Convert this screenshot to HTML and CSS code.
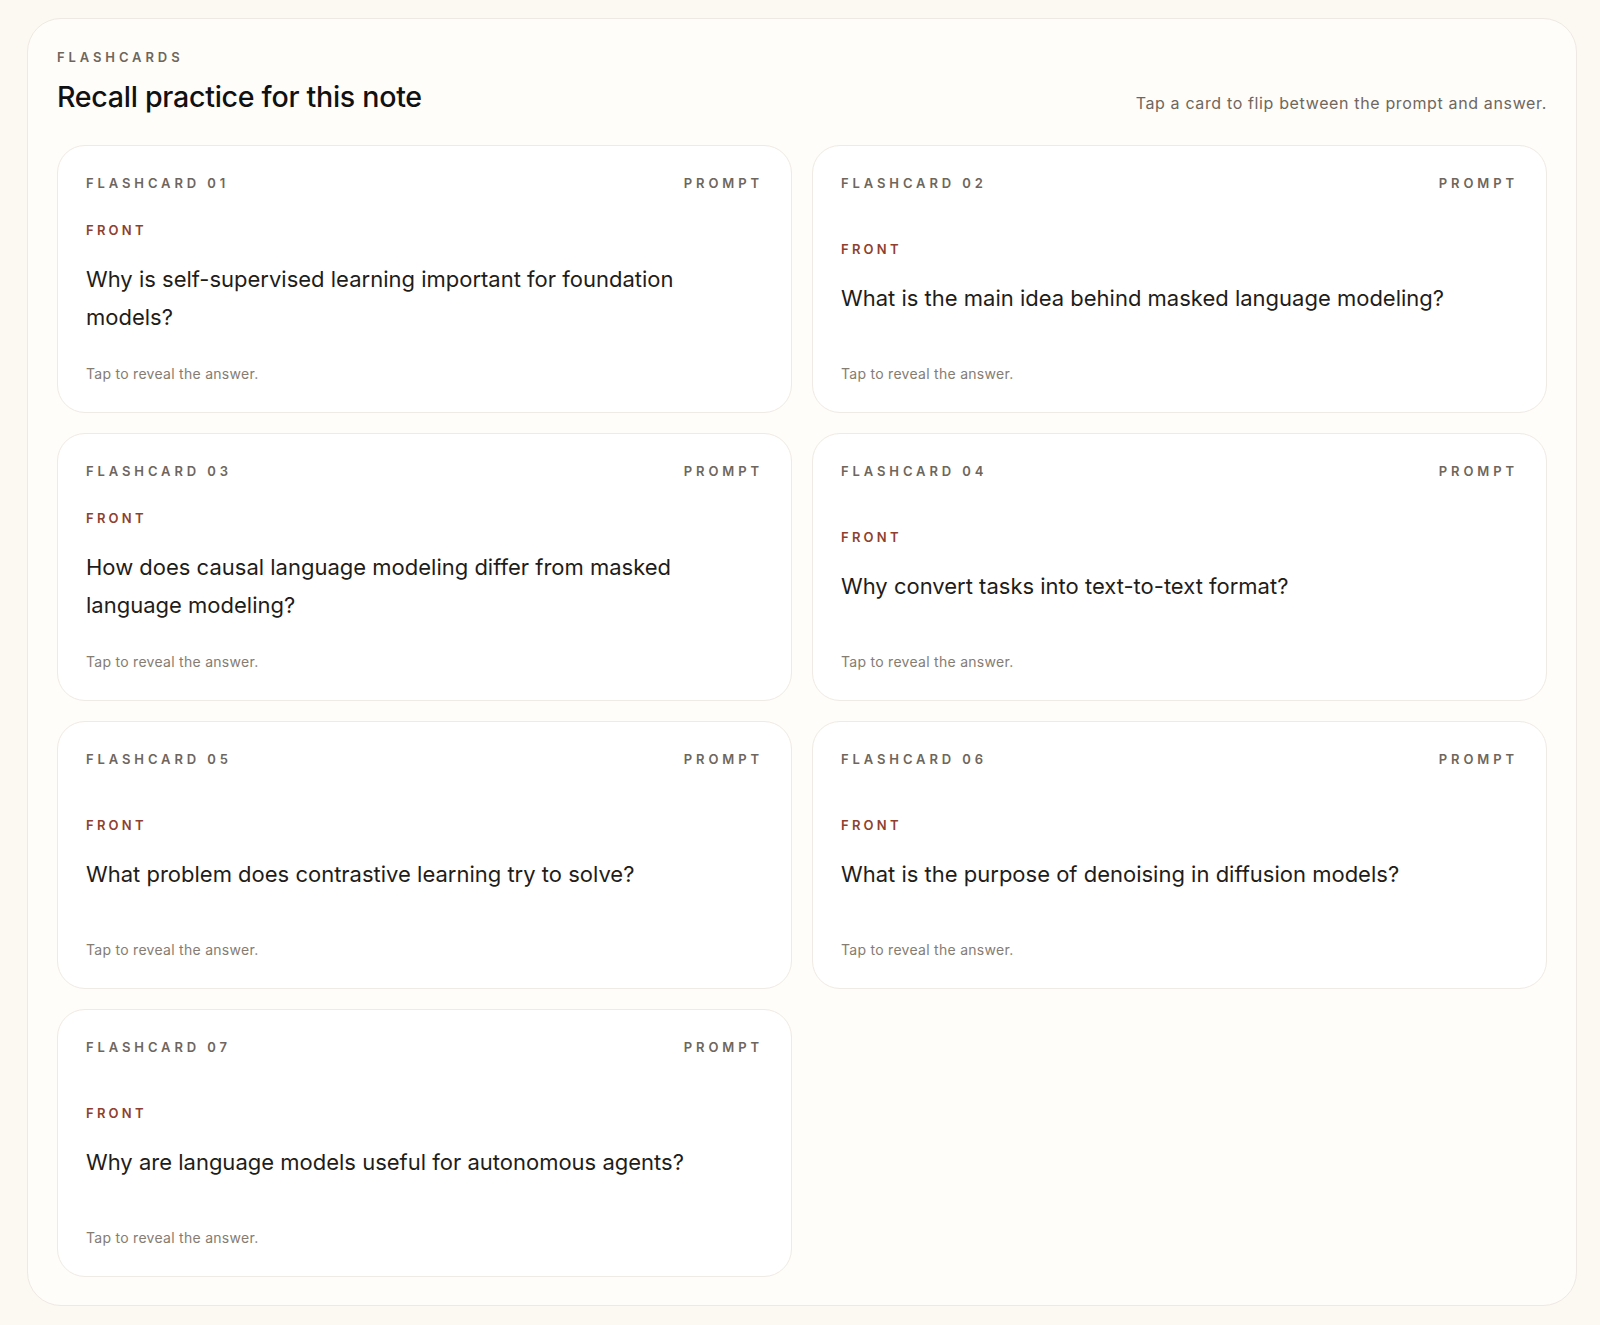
FILE: index.html
```html
<!DOCTYPE html>
<html lang="en">
<head>
<meta charset="utf-8">
<title>Flashcards</title>
<link rel="stylesheet" href="styles.css">
</head>
<body>
<section class="panel">
  <header class="panel-head">
    <div class="head-left">
      <div class="eyebrow">FLASHCARDS</div>
      <h1 class="title">Recall practice for this note</h1>
    </div>
    <p class="hint">Tap a card to flip between the prompt and answer.</p>
  </header>
  <div class="grid">
    <article class="card">
      <div class="card-head"><span class="label">FLASHCARD 01</span><span class="label">PROMPT</span></div>
      <div class="card-body"><div class="side">FRONT</div><p class="question">Why is self-supervised learning important for foundation models?</p></div>
      <p class="tap">Tap to reveal the answer.</p>
    </article>
    <article class="card">
      <div class="card-head"><span class="label">FLASHCARD 02</span><span class="label">PROMPT</span></div>
      <div class="card-body"><div class="side">FRONT</div><p class="question">What is the main idea behind masked language modeling?</p></div>
      <p class="tap">Tap to reveal the answer.</p>
    </article>
    <article class="card">
      <div class="card-head"><span class="label">FLASHCARD 03</span><span class="label">PROMPT</span></div>
      <div class="card-body"><div class="side">FRONT</div><p class="question">How does causal language modeling differ from masked language modeling?</p></div>
      <p class="tap">Tap to reveal the answer.</p>
    </article>
    <article class="card">
      <div class="card-head"><span class="label">FLASHCARD 04</span><span class="label">PROMPT</span></div>
      <div class="card-body"><div class="side">FRONT</div><p class="question">Why convert tasks into text-to-text format?</p></div>
      <p class="tap">Tap to reveal the answer.</p>
    </article>
    <article class="card">
      <div class="card-head"><span class="label">FLASHCARD 05</span><span class="label">PROMPT</span></div>
      <div class="card-body"><div class="side">FRONT</div><p class="question">What problem does contrastive learning try to solve?</p></div>
      <p class="tap">Tap to reveal the answer.</p>
    </article>
    <article class="card">
      <div class="card-head"><span class="label">FLASHCARD 06</span><span class="label">PROMPT</span></div>
      <div class="card-body"><div class="side">FRONT</div><p class="question">What is the purpose of denoising in diffusion models?</p></div>
      <p class="tap">Tap to reveal the answer.</p>
    </article>
    <article class="card">
      <div class="card-head"><span class="label">FLASHCARD 07</span><span class="label">PROMPT</span></div>
      <div class="card-body"><div class="side">FRONT</div><p class="question">Why are language models useful for autonomous agents?</p></div>
      <p class="tap">Tap to reveal the answer.</p>
    </article>
  </div>
</section>
</body>
</html>
```
FILE: styles.css
```css
* { box-sizing: border-box; }
html, body { margin: 0; }
body {
  background: #fcf8f2;
  padding: 18px 23px 19px 27px;
  font-family: "Inter", "Liberation Sans", sans-serif;
  color: #1f1d1a;
}
.panel {
  background: #fffdfa;
  border: 1px solid #eee9e2;
  border-radius: 34px;
  padding: 30px 29px 28px;
}
.panel-head {
  display: flex;
  justify-content: space-between;
  align-items: flex-end;
  margin-bottom: 31px;
}
.eyebrow {
  font-size: 13px;
  line-height: 16px;
  font-weight: 600;
  letter-spacing: 0.3em;
  color: #6e665c;
}
.title {
  margin: 15px 0 0;
  font-size: 28.6px;
  line-height: 34px;
  font-weight: 500;
  color: #111;
  letter-spacing: -0.01em;
}
.hint {
  margin: 0;
  font-size: 16px;
  line-height: 22px;
  letter-spacing: 0.04em;
  color: #6f675d;
}
.grid {
  display: grid;
  grid-template-columns: 1fr 1fr;
  gap: 20px;
}
.card {
  background: #ffffff;
  border: 1px solid #efeae3;
  border-radius: 28px;
  padding: 29px 28px 28px;
  min-height: 268px;
  display: flex;
  flex-direction: column;
}
.card-head {
  display: flex;
  justify-content: space-between;
}
.label {
  font-size: 13px;
  line-height: 16px;
  font-weight: 600;
  letter-spacing: 0.3em;
  color: #6e665c;
}
.card-body {
  flex: 1;
  display: flex;
  flex-direction: column;
  justify-content: center;
  padding-top: 4px;
}
.side {
  font-size: 13px;
  line-height: 16px;
  font-weight: 600;
  letter-spacing: 0.25em;
  color: #8f3f2f;
}
.question {
  margin: 22px 0 0;
  font-size: 22px;
  line-height: 38px;
  font-weight: 400;
  color: #1f1d1a;
  max-width: 640px;
}
.tap {
  margin: 0;
  font-size: 14px;
  line-height: 21px;
  letter-spacing: 0.02em;
  color: #857c72;
}
```
